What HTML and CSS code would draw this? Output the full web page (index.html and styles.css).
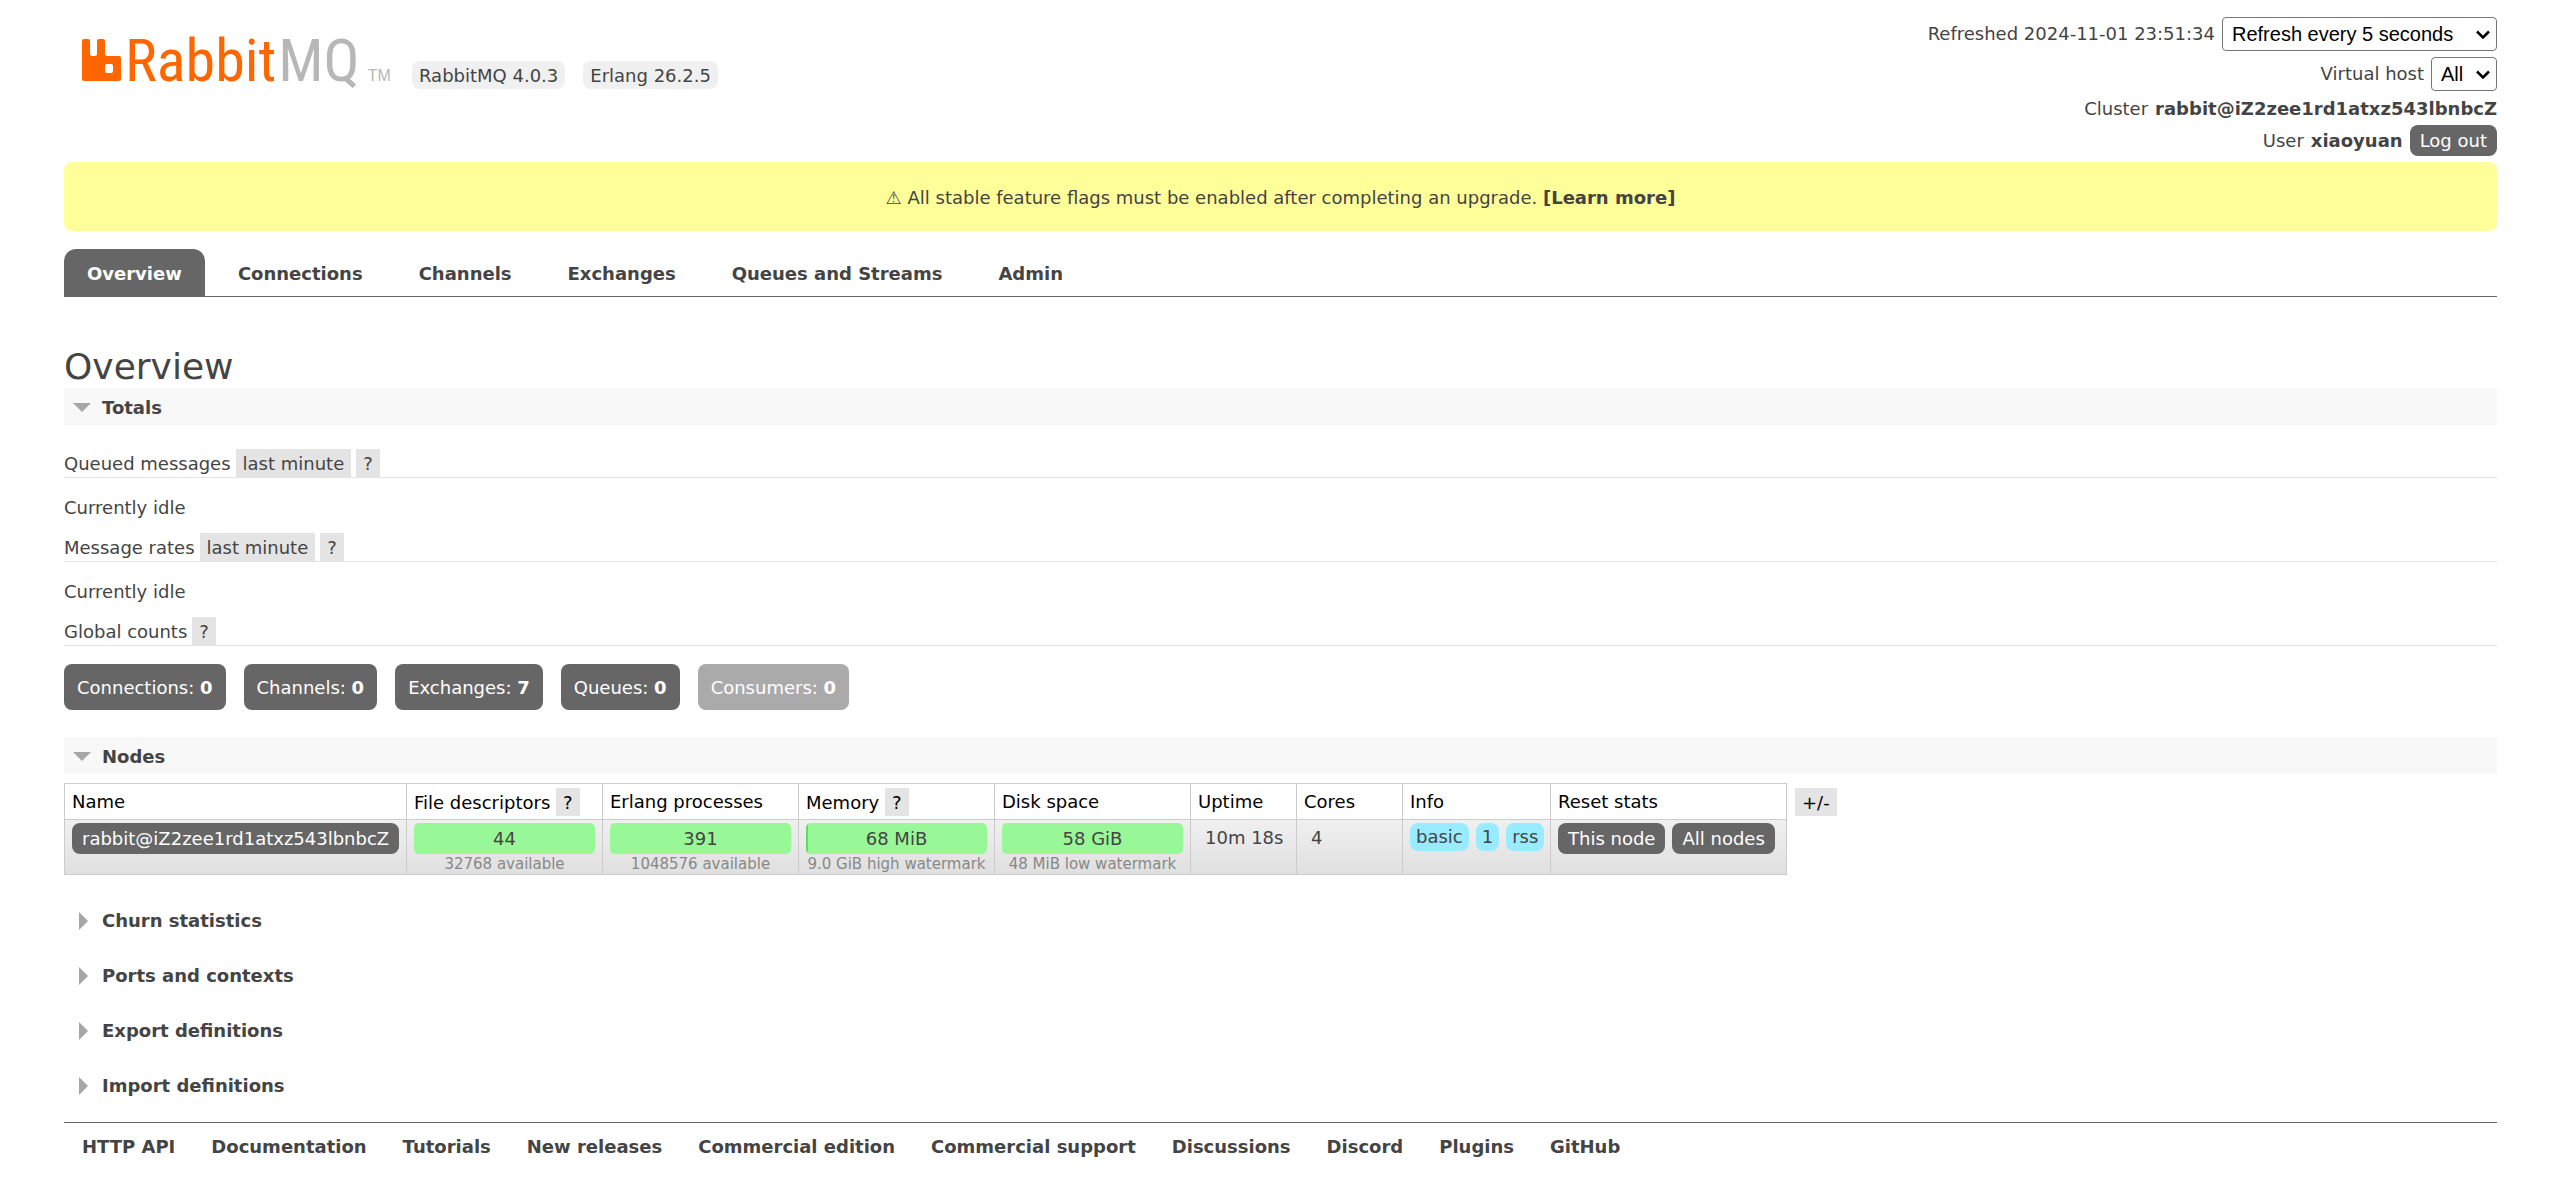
FILE: index.html
```html
<!DOCTYPE html>
<html lang="en">
<head>
<meta charset="utf-8">
<title>RabbitMQ Management</title>
<link rel="stylesheet" href="styles.css">
</head>
<body>
<header class="masthead">
  <div class="brand">
    <a class="logo" href="#" aria-label="RabbitMQ">
      <svg class="logo-mark" viewBox="0 0 39 42" aria-hidden="true"><path fill="#f60" fill-rule="evenodd" d="M2 0H6Q8 0 8 2V15Q8 17 10 17H13Q15 17 15 15V2Q15 0 17 0H21Q23 0 23 2V15Q23 17 25 17H37Q39 17 39 19V40Q39 42 37 42H2Q0 42 0 40V2Q0 0 2 0ZM25 25Q23 25 23 27V32Q23 34 25 34H29Q31 34 31 32V27Q31 25 29 25Z"/></svg>
      <span class="logo-rabbit">Rabbit</span><span class="logo-mq">MQ</span><span class="logo-tm">TM</span>
    </a>
    <ul class="versions">
      <li>RabbitMQ 4.0.3</li>
      <li>Erlang 26.2.5</li>
    </ul>
  </div>
  <div class="session">
    <div class="session-row session-select"><label for="refresh">Refreshed 2024-11-01 23:51:34</label><select id="refresh" class="select select-refresh"><option>Refresh every 5 seconds</option></select></div>
    <div class="session-row session-select"><label for="vhost">Virtual host</label><select id="vhost" class="select select-vhost"><option>All</option></select></div>
    <div class="session-row session-cluster">Cluster <strong>rabbit@iZ2zee1rd1atxz543lbnbcZ</strong></div>
    <div class="session-row">User <strong>xiaoyuan</strong><button class="button" type="button">Log out</button></div>
  </div>
</header>
<p class="notice">⚠ All stable feature flags must be enabled after completing an upgrade. <a href="#">[Learn more]</a></p>
<nav class="tabs">
  <a class="tab tab-active" href="#">Overview</a>
  <a class="tab" href="#">Connections</a>
  <a class="tab" href="#">Channels</a>
  <a class="tab" href="#">Exchanges</a>
  <a class="tab" href="#">Queues and Streams</a>
  <a class="tab" href="#">Admin</a>
</nav>
<main>
  <h1>Overview</h1>
  <section>
    <h2 class="section-title section-open"><svg class="arrow-down" viewBox="0 0 18 9" aria-hidden="true"><path d="M0 0H18L9 9Z"/></svg>Totals</h2>
    <div class="totals">
      <h3>Queued messages <button class="chip" type="button">last minute</button><button class="chip" type="button">?</button></h3>
      <p class="idle">Currently idle</p>
      <h3>Message rates <button class="chip" type="button">last minute</button><button class="chip" type="button">?</button></h3>
      <p class="idle">Currently idle</p>
      <h3>Global counts <button class="chip" type="button">?</button></h3>
      <div class="counts">
        <a class="count" href="#">Connections: <strong>0</strong></a>
        <a class="count" href="#">Channels: <strong>0</strong></a>
        <a class="count" href="#">Exchanges: <strong>7</strong></a>
        <a class="count" href="#">Queues: <strong>0</strong></a>
        <span class="count count-off">Consumers: <strong>0</strong></span>
      </div>
    </div>
  </section>
  <section>
    <h2 class="section-title section-open"><svg class="arrow-down" viewBox="0 0 18 9" aria-hidden="true"><path d="M0 0H18L9 9Z"/></svg>Nodes</h2>
    <div class="nodes">
      <table>
        <colgroup><col class="col-name"><col class="col-meter"><col class="col-meter"><col class="col-meter"><col class="col-meter"><col class="col-small"><col class="col-small"><col class="col-info"><col class="col-reset"></colgroup>
        <thead>
          <tr><th>Name</th><th>File descriptors <button class="chip" type="button">?</button></th><th>Erlang processes</th><th>Memory <button class="chip" type="button">?</button></th><th>Disk space</th><th>Uptime</th><th>Cores</th><th>Info</th><th>Reset stats</th></tr>
        </thead>
        <tbody>
          <tr>
            <td><a class="button" href="#">rabbit@iZ2zee1rd1atxz543lbnbcZ</a></td>
            <td><div class="meter">44</div><small>32768 available</small></td>
            <td><div class="meter">391</div><small>1048576 available</small></td>
            <td><div class="meter meter-used">68 MiB</div><small>9.0 GiB high watermark</small></td>
            <td><div class="meter">58 GiB</div><small>48 MiB low watermark</small></td>
            <td class="plain">10m 18s</td>
            <td class="plain">4</td>
            <td><div class="cell-row"><abbr>basic</abbr><abbr>1</abbr><abbr>rss</abbr></div></td>
            <td><div class="cell-row"><button class="button" type="button">This node</button><button class="button" type="button">All nodes</button></div></td>
          </tr>
        </tbody>
      </table>
      <button class="chip columns" type="button">+/-</button>
    </div>
  </section>
  <div class="closed-sections">
    <h2 class="section-title"><svg class="arrow-right" viewBox="0 0 9 18" aria-hidden="true"><path d="M0 0L9 9L0 18Z"/></svg>Churn statistics</h2>
    <h2 class="section-title"><svg class="arrow-right" viewBox="0 0 9 18" aria-hidden="true"><path d="M0 0L9 9L0 18Z"/></svg>Ports and contexts</h2>
    <h2 class="section-title"><svg class="arrow-right" viewBox="0 0 9 18" aria-hidden="true"><path d="M0 0L9 9L0 18Z"/></svg>Export definitions</h2>
    <h2 class="section-title"><svg class="arrow-right" viewBox="0 0 9 18" aria-hidden="true"><path d="M0 0L9 9L0 18Z"/></svg>Import definitions</h2>
  </div>
</main>
<footer class="links">
  <a href="#">HTTP API</a>
  <a href="#">Documentation</a>
  <a href="#">Tutorials</a>
  <a href="#">New releases</a>
  <a href="#">Commercial edition</a>
  <a href="#">Commercial support</a>
  <a href="#">Discussions</a>
  <a href="#">Discord</a>
  <a href="#">Plugins</a>
  <a href="#">GitHub</a>
</footer>
</body>
</html>
```
FILE: styles.css
```css
* { box-sizing: border-box; }
body {
  margin: 0 62px 0 64px;
  font: 18px/22px Verdana, "DejaVu Sans", sans-serif;
  color: #444;
  background: #fff;
}
a { color: inherit; text-decoration: none; }
h1, h2, h3, p, ul { margin: 0; padding: 0; }
button { font: inherit; border: 0; }

.masthead { display: flex; justify-content: space-between; padding-top: 17px; }
.brand { display: flex; align-items: flex-start; padding-left: 18px; gap: 23px; }
.logo {
  display: flex;
  align-items: baseline;
  width: 307px;
  padding-top: 14px;
  white-space: nowrap;
  font: 60px/60px "Roboto Condensed", Roboto, sans-serif;
}
.logo-mark { flex: none; width: 39px; height: 42px; margin-right: 4px; }
.logo-rabbit { color: #f60; }
.logo-mq { margin-left: 2px; color: #b7b7b7; }
.logo-tm { margin-left: 8px; font: 16px/16px "Liberation Sans", sans-serif; color: #b7b7b7; }
.versions { display: flex; gap: 18px; margin-top: 44px; list-style: none; }
.versions li { padding: 4px 7px 2px; background: #f0f0f0; border-radius: 8px; }

.session { display: flex; flex-direction: column; align-items: flex-end; }
.session-row { display: flex; align-items: center; gap: 7px; height: 31px; }
.session-select { height: 34px; margin-bottom: 6px; }
.session-cluster { margin-bottom: 5px; padding-top: 1px; height: 23px; }
.select {
  height: 34px;
  padding: 0 9px;
  font: 20px "Liberation Sans", Arial, sans-serif;
  color: #000;
  border: 1px solid #767676;
  border-radius: 4px;
  appearance: none;
  background: #fff url("data:image/svg+xml,%3Csvg xmlns='http://www.w3.org/2000/svg' width='14' height='9'%3E%3Cpath d='M1 1.500L7 7.500L13 1.500' fill='none' stroke='%23000' stroke-width='2.500'/%3E%3C/svg%3E") no-repeat right 6px center;
}
.select-refresh { width: 275px; }
.select-vhost { width: 66px; }
.button {
  display: inline-block;
  padding: 5px 10px 4px;
  line-height: 22px;
  color: #fff;
  background: #666;
  border-radius: 8px;
}

.notice {
  margin-top: 6px;
  padding: 25px 0 22px;
  text-align: center;
  background: #ff9;
  border-radius: 8px;
}
.notice a { font-weight: bold; }

.tabs { display: flex; gap: 10px; margin-top: 18px; border-bottom: 1px solid #666; }
.tab { padding: 14px 23px 11px; font-weight: bold; border-radius: 12px 12px 0 0; }
.tab-active { color: #fff; background: #666; }

h1 { margin-top: 48px; font-size: 36px; line-height: 43px; font-weight: normal; }
.section-title {
  display: flex;
  align-items: center;
  height: 37px;
  padding: 1px 0 0 9px;
  font-size: 18px;
  font-weight: bold;
}
.section-open { padding-top: 2px; background: #f8f8f8; }
.section-title svg { fill: #a6a6a6; }
.arrow-down { width: 18px; height: 9px; margin-right: 11px; }
.arrow-right { width: 9px; height: 18px; margin: 0 14px 0 6px; }

.totals { padding: 24px 0 27px; }
.totals h3 {
  display: flex;
  align-items: baseline;
  gap: 5px;
  font-size: 18px;
  font-weight: normal;
  border-bottom: 1px solid #e4e4e4;
}
.chip { padding: 4px 7px 2px; line-height: 22px; color: inherit; background: #e4e4e4; }
.idle { padding: 19px 0 14px; }
.counts { display: flex; gap: 18px; margin-top: 18px; }
.count { padding: 13px 13px 11px; color: #fff; background: #666; border-radius: 8px; }
.count-off { background: #aaa; }

.nodes { display: flex; align-items: flex-start; gap: 8px; margin-top: 9px; color: #000; }
table { table-layout: fixed; width: 1723px; border-collapse: collapse; }
.col-name { width: 342px; }
.col-meter { width: 196px; }
.col-small { width: 106px; }
.col-info { width: 148px; }
.col-reset { width: 236px; }
th, td { padding: 4px 7px; text-align: left; vertical-align: top; white-space: nowrap; border: 1px solid #ccc; }
th { padding: 4px 7px 3px; height: 36px; vertical-align: middle; font-weight: normal; }
td { padding: 3px 7px 0; height: 55px; color: #444; }
tbody tr { background: linear-gradient(#f0f0f0, #dfdfdf); }
.columns { margin-top: 5px; }
.meter { padding: 5px 0 4px; text-align: center; background: #98f898; border-radius: 5px; }
.meter-used { background: linear-gradient(to right, #5fdc5f 2px, #98f898 2px); }
small { display: block; font-size: 15px; line-height: 20px; text-align: center; color: #888; }
.plain { padding: 7px 14px 0; }
.cell-row { display: flex; align-items: flex-start; gap: 7px; }
abbr { padding: 3px 6px; background: #99ebff; border-radius: 8px; }

.closed-sections { display: flex; flex-direction: column; gap: 18px; margin-top: 27px; }
.links { display: flex; gap: 36px; margin-top: 18px; padding: 13px 18px 28px; font-weight: bold; border-top: 1px solid #666; }
```
